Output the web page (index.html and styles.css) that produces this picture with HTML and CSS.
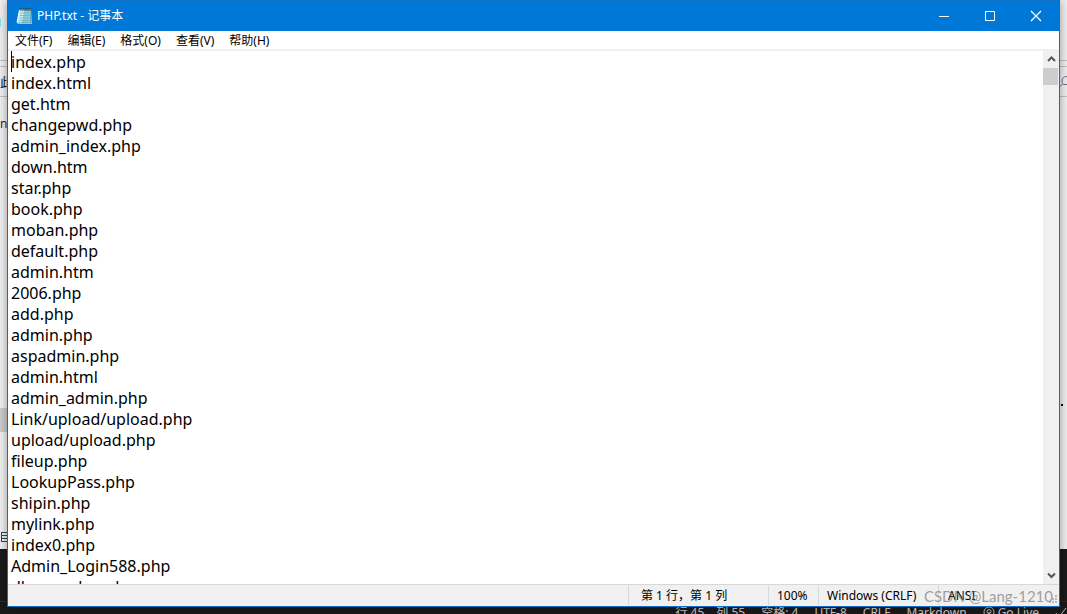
FILE: index.html
```html
<!DOCTYPE html>
<html lang="zh-CN">
<head>
<meta charset="utf-8">
<title>PHP.txt - 记事本</title>
<link rel="stylesheet" href="styles.css">
</head>
<body>
<div class="desktop">
  <div class="backdrop">
    <div class="explorer">
      <div class="explorer-ribbon"><i class="cyan-mark"></i></div>
      <div class="explorer-gap"></div>
      <div class="explorer-address"><span>此</span>
        <svg class="search" width="8" height="14" viewBox="0 0 8 14"><path d="M8 1.5C4.500 1.500 3 3.500 3 6c0 1.500.5 3 1.500 3.500H8M3.500 9 0 12.500" fill="none" stroke="#77708f"/></svg>
      </div>
      <div class="explorer-body">
        <span class="row-name">n</span>
        <i class="selected-row"></i>
        <svg class="row-icon" width="8" height="12" viewBox="0 0 8 12"><path d="M1.500 1v10M1 1.500h7M1 4.500h7M1 7.500h7M1 10.500h7" fill="none" stroke="#33475f"/></svg>
        <i class="dot"></i>
      </div>
    </div>
    <div class="editor">
      <div class="editor-panel"></div>
      <div class="editor-status">
        <span>行 45，列 55</span><span>空格: 4</span><span>UTF-8</span><span>CRLF</span><span>Markdown</span>
        <span class="live"><svg width="12" height="12" viewBox="0 0 12 12"><circle cx="6" cy="6" r="5" fill="none" stroke="#bbb"/><circle cx="6" cy="5.500" r="2" fill="none" stroke="#bbb"/><path d="M6 6v5" stroke="#bbb"/></svg>Go Live</span>
        <svg width="12" height="12" viewBox="0 0 12 12"><path d="m1 7 3 4 7-9" fill="none" stroke="#bbb"/></svg>
      </div>
    </div>
  </div>

  <main class="window">
    <header class="titlebar">
      <svg class="app-icon" width="18" height="18" viewBox="0 0 18 18">
        <path d="M3.500 2.500h11.500l-.5 13H1z" fill="#8ecbd3"/>
        <path d="M3.500 2.500h5L6 15.500H1z" fill="#c9edf0"/>
        <path d="M15 3v12.500L1.500 16v1H16z" fill="#d9b78c"/>
        <path d="M4 6h10M4 8.500h10M3.500 11h10M3 13.500h10" stroke="#64a9b5" stroke-width=".7"/>
        <path d="M4 1v3M6 1v3M8 1v3M10 1v3M12 1v3M14 1v3" stroke="#343f45"/>
        <path d="M3.500 3 1 15.500" stroke="#eefcff"/>
      </svg>
      <h1 class="title">PHP.txt - 记事本</h1>
      <div class="controls">
        <button type="button" aria-label="最小化"><svg width="12" height="12" viewBox="0 0 12 12"><path d="M1 6.500h10" stroke="#fff"/></svg></button>
        <button type="button" aria-label="最大化"><svg width="12" height="12" viewBox="0 0 12 12"><path d="M1.500 1.500h9v9h-9z" fill="none" stroke="#fff"/></svg></button>
        <button type="button" aria-label="关闭"><svg width="12" height="12" viewBox="0 0 12 12"><path d="m1 1 10 10M11 1 1 11" stroke="#fff" stroke-width="1.300"/></svg></button>
      </div>
    </header>
    <nav class="menubar">
      <button type="button">文件(F)</button>
      <button type="button">编辑(E)</button>
      <button type="button">格式(O)</button>
      <button type="button">查看(V)</button>
      <button type="button">帮助(H)</button>
    </nav>
    <div class="content">
      <textarea class="text" aria-label="文本编辑器" spellcheck="false" wrap="off">index.php
index.html
get.htm
changepwd.php
admin_index.php
down.htm
star.php
book.php
moban.php
default.php
admin.htm
2006.php
add.php
admin.php
aspadmin.php
admin.html
admin_admin.php
Link/upload/upload.php
upload/upload.php
fileup.php
LookupPass.php
shipin.php
mylink.php
index0.php
Admin_Login588.php
dbownerbar.php</textarea>
      <i class="caret"></i>
      <div class="scrollbar">
        <button type="button" aria-label="向上滚动"><svg width="9" height="7" viewBox="0 0 9 7"><path d="m1 5 3.500-3.500L8 5" fill="none" stroke="#555" stroke-width="2"/></svg></button>
        <div class="thumb"></div>
        <button type="button" class="down" aria-label="向下滚动"><svg width="9" height="7" viewBox="0 0 9 7"><path d="m1 1.500 3.500 3.500L8 1.500" fill="none" stroke="#555" stroke-width="2"/></svg></button>
      </div>
    </div>
    <footer class="statusbar">
      <span class="position">第 1 行，第 1 列</span>
      <span class="zoom">100%</span>
      <span class="eol">Windows (CRLF)</span>
      <span class="encoding">ANSI</span>
      <svg class="grip" width="8" height="8" viewBox="0 0 8 8"><path d="M6 0h2v2H6zM3 3h2v2H3zM6 3h2v2H6zM0 6h2v2H0zM3 6h2v2H3zM6 6h2v2H6z" fill="#bbb"/></svg>
    </footer>
  </main>
  <div class="watermark">CSDN @Lang-1210</div>
</div>
</body>
</html>
```

FILE: styles.css
```css
* { box-sizing: border-box; }

body {
  margin: 0;
  font-family: "Noto Sans", "Noto Sans CJK SC", sans-serif;
  font-size: 12px;
  color: #000;
}

button {
  margin: 0;
  padding: 0;
  border: 0;
  background: none;
  color: inherit;
  font: inherit;
}

.desktop {
  position: relative;
  height: 100vh;
  overflow: hidden;
}

.backdrop {
  display: flex;
  flex-direction: column;
  height: 100%;
}

.explorer {
  flex: 1;
  display: flex;
  flex-direction: column;
  min-height: 0;
  background: #f3f3f3;
}

.explorer-ribbon {
  height: 61px;
  padding-top: 18px;
  border-bottom: 1px solid #c4c4c4;
}

.cyan-mark {
  display: block;
  width: 1px;
  height: 9px;
  background: #8de4f2;
}

.explorer-gap {
  height: 6px;
  border-bottom: 1px solid #c4c4c4;
}

.explorer-address {
  display: flex;
  justify-content: space-between;
  align-items: center;
  height: 30px;
  border-bottom: 1px solid #c4c4c4;
}

.explorer-body {
  position: relative;
  flex: 1;
}

.row-name,
.selected-row,
.row-icon,
.dot {
  position: absolute;
  left: 0;
}

.row-name { top: 18px; color: #4d1725; }
.selected-row { top: 311px; width: 8px; height: 24px; background: #d0d0d0; }
.row-icon { bottom: 6px; }
.dot { top: 307px; left: auto; right: 4px; width: 2px; height: 2px; background: #000; }

.editor {
  display: flex;
  flex-direction: column;
  height: 65px;
  background: #1a1a1a;
}

.editor-panel {
  flex: none;
  height: 53px;
  border-bottom: 1px solid #292929;
}

.editor-status {
  display: flex;
  justify-content: flex-end;
  align-items: center;
  gap: 16px;
  flex: none;
  height: 20px;
  color: #ccc;
  white-space: nowrap;
}

.live {
  display: flex;
  align-items: center;
  gap: 3px;
}

.window {
  position: absolute;
  inset: 0 7px 7px;
  display: flex;
  flex-direction: column;
  border: 1px solid #0f6fc4;
  background: #fff;
  box-shadow: 0 0 10px rgba(0, 0, 0, 0.4);
}

.titlebar {
  display: flex;
  align-items: center;
  height: 30px;
  padding-left: 8px;
  background: #0078d7;
  color: #fff;
}

.title {
  flex: 1;
  margin: 0 0 0 3px;
  font-size: 12px;
  font-weight: 400;
  line-height: 16px;
}

.controls { display: flex; }

.controls button {
  display: grid;
  place-items: center;
  width: 46px;
  height: 28px;
}

.menubar {
  display: flex;
  align-items: center;
  gap: 15px;
  height: 18px;
  padding-left: 7px;
}

.content {
  position: relative;
  flex: 1;
  display: flex;
  min-height: 0;
  border-top: 2px solid #f0f0f0;
}

.text {
  flex: 1;
  min-width: 0;
  padding: 1px 3px 0;
  border: 0;
  outline: 0;
  overflow: hidden;
  resize: none;
  background: #fff;
  color: #000;
  font: 16px/21px "Noto Sans", "Noto Sans CJK SC", sans-serif;
}

.caret {
  position: absolute;
  top: 0;
  left: 3px;
  width: 1px;
  height: 21px;
  background: #000;
}

.scrollbar {
  display: flex;
  flex-direction: column;
  width: 16px;
  background: #f0f0f0;
}

.scrollbar button {
  display: grid;
  place-items: center;
  height: 17px;
}

.thumb {
  width: 15px;
  height: 17px;
  background: #cdcdcd;
}

.scrollbar .down { margin-top: auto; }

.statusbar {
  display: flex;
  align-items: center;
  height: 22px;
  justify-content: flex-end;
  border-top: 1px solid #d7d7d7;
  background: #f0f0f0;
}

.statusbar span {
  height: 19px;
  border-left: 1px solid #d7d7d7;
  line-height: 19px;
  white-space: nowrap;
}

.position { width: 140px; padding-left: 12px; }
.zoom { width: 50px; padding-left: 8px; }
.eol { width: 120px; padding-left: 8px; }
.encoding { width: 111px; padding-left: 9px; }

.grip {
  align-self: flex-end;
  margin: 0 2px 3px 0;
}

.watermark {
  position: absolute;
  right: 14px;
  bottom: 9px;
  color: rgba(130, 130, 130, 0.75);
  font: 15px/18px Lato, sans-serif;
}
```
